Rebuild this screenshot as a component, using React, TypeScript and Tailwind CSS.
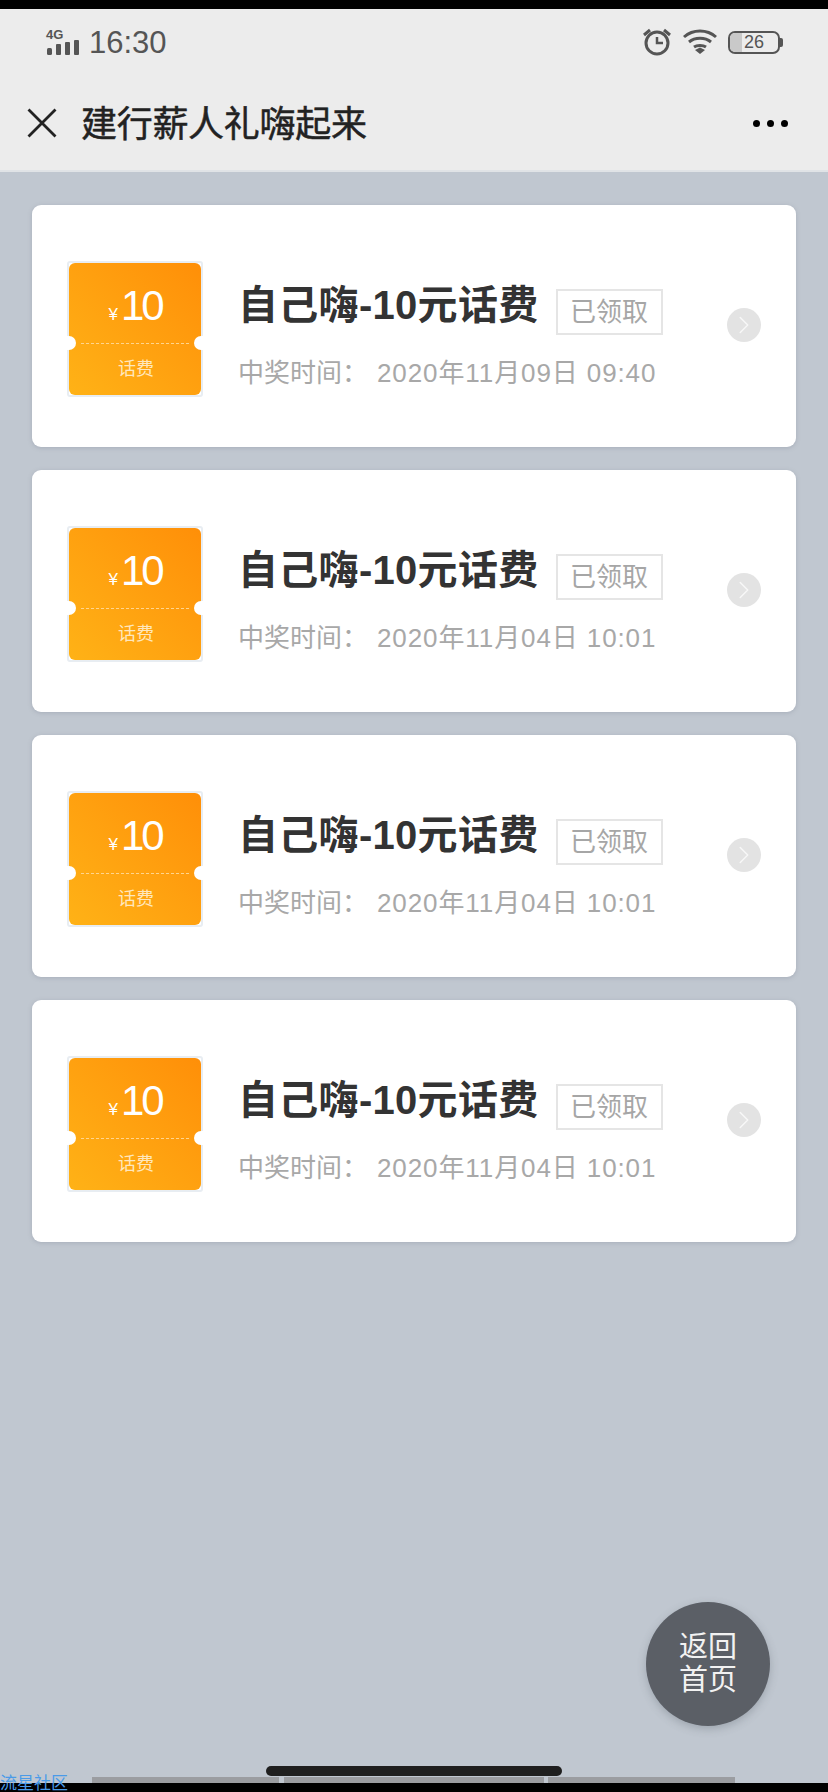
import React from 'react';
import { ChevronRight } from 'lucide-react';

const prizes = [
  { id: 1, time: '2020年11月09日 09:40' },
  { id: 2, time: '2020年11月04日 10:01' },
  { id: 3, time: '2020年11月04日 10:01' },
  { id: 4, time: '2020年11月04日 10:01' },
];

const font = "font-['Liberation_Sans','Noto_Sans_CJK_SC',sans-serif]";

const StatusBar = () => (
  <div className="flex h-[64px] items-center justify-between pl-[46px] pr-[45px] pt-[2px]">
    <div className="flex items-center gap-[9px]">
      <div className="flex w-[34px] flex-col">
        <span className="text-[13px] font-bold leading-[11px] text-[#555]">4G</span>
        <svg width="34" height="16" viewBox="0 0 34 16" fill="#555">
          <rect x="1" y="8" width="5" height="7" rx="1.500" />
          <rect x="10" y="4" width="5" height="11" rx="1" />
          <rect x="19" y="2" width="5" height="13" rx="1" />
          <rect x="28" y="0" width="5" height="15" rx="1" />
        </svg>
      </div>
      <span className="text-[31px] leading-none text-[#555]">16:30</span>
    </div>
    <div className="flex items-center gap-[10px]">
      <svg width="30" height="28" viewBox="0 0 30 28" fill="none" stroke="#555" strokeWidth="3">
        <circle cx="15" cy="15" r="11" />
        <path d="M15 9v6h6" strokeWidth="2.5" />
        <path d="M2 7l6-5M28 7l-6-5" strokeWidth="3" />
      </svg>
      <svg width="36" height="26" viewBox="0 0 36 26" fill="none" stroke="#555" strokeWidth="3">
        <path d="M2 8c9-8 23-8 32 0" />
        <path d="M7 13c6-5 16-5 22 0" />
        <path d="M12 18c3-2 9-2 12 0" />
        <path d="M13 21l5-2.500 5 2.500-5 4z" fill="#555" stroke="none" />
      </svg>
      <div className="flex items-center">
        <div className="relative flex h-[23px] w-[52px] items-center justify-center overflow-hidden rounded-[7px] border-[2px] border-[#555]">
          <div className="absolute bottom-0 left-0 top-0 w-[12px] bg-[#c9c9c9]" />
          <span className="relative text-[18px] leading-none text-[#555]">26</span>
        </div>
        <div className="h-[9px] w-[3px] rounded-r-[2px] bg-[#555]" />
      </div>
    </div>
  </div>
);

const Ticket = () => (
  <div className="relative mt-[5px] h-[136px] w-[136px] shrink-0 rounded-[3px] border-[2px] border-[#e8edf2] bg-[#fff]">
    <div className="flex h-full w-full flex-col items-center rounded-[6px] bg-gradient-to-tr from-[#ffb216] to-[#ff8f08]">
      <div className="flex h-[80px] items-end pb-[16px] text-[#fff]">
        <span className="mb-[4px] mr-[3px] text-[17px] leading-none">¥</span>
        <span className="text-[42px] leading-none tracking-[-3px]">10</span>
      </div>
      <div className="w-[108px] border-t border-dashed border-[#ffd58e]" />
      <span className="ml-[2px] mt-[16px] text-[18px] leading-none text-[#ffe7bd]">话费</span>
    </div>
    <div className="absolute left-[-3px] top-[73px] h-[14px] w-[10px] rounded-r-full bg-[#fff]" />
    <div className="absolute right-[-3px] top-[73px] h-[14px] w-[10px] rounded-l-full bg-[#fff]" />
  </div>
);

const PrizeCard = ({ time }: { time: string }) => (
  <div className="flex h-[242px] items-center rounded-[9px] bg-[#fff] pl-[35px] pr-[35px] shadow-[0_1px_4px_rgba(120,130,145,0.35)]">
    <Ticket />
    <div className="ml-[35px] mt-[18px] flex flex-col">
      <div className="flex items-start">
        <span className="text-[40px] font-bold leading-none tracking-[0.3px] text-[#333]">自己嗨-10元话费</span>
        <span className="ml-[17px] mt-[4px] flex h-[46px] w-[107px] items-center justify-center border-[2px] border-[#e5e5e5] text-[26px] leading-none text-[#a6a6a6]">
          已领取
        </span>
      </div>
      <div className="mt-[25px] flex items-center text-[26px] leading-none text-[#a8a8a8]">
        <span className="w-[139px]">中奖时间：</span>
        <span className="tracking-[0.9px]">{time}</span>
      </div>
    </div>
    <div className="mb-[2px] ml-auto flex h-[34px] w-[34px] shrink-0 items-center justify-center rounded-full bg-[#e3e3e3]">
      <ChevronRight size={30} strokeWidth={1.2} color="#f7f7f7" />
    </div>
  </div>
);

export default function App() {
  return (
    <div className={`relative flex h-[1792px] w-[828px] flex-col overflow-hidden bg-[#000] ${font}`}>
      <div className="mt-[9px] h-[163px] shrink-0 border-b-[2px] border-[#e0e3e6] bg-[#ececec]">
        <StatusBar />
        <div className="flex h-[100px] items-center pl-[27px] pr-[40px]">
          <svg width="30" height="30" viewBox="0 0 30 30" fill="none" stroke="#222" strokeWidth="2.8">
            <path d="M1.500 1.500l27 27M28.500 1.500l-27 27" />
          </svg>
          <h1 className="ml-[24px] mt-[4px] text-[36px] font-normal leading-none tracking-[-0.3px] text-[#222] [-webkit-text-stroke:0.5px_#222]">
            建行薪人礼嗨起来
          </h1>
          <div className="ml-auto flex gap-[7px]">
            <span className="h-[7px] w-[7px] rounded-full bg-[#000]" />
            <span className="h-[7px] w-[7px] rounded-full bg-[#000]" />
            <span className="h-[7px] w-[7px] rounded-full bg-[#000]" />
          </div>
        </div>
      </div>

      <div className="flex flex-1 flex-col gap-[23px] bg-[#c0c7d0] px-[32px] pt-[33px]">
        {prizes.map((p) => (
          <PrizeCard key={p.id} time={p.time} />
        ))}
      </div>

      <div className="flex h-[6px] shrink-0 bg-[#c0c7d0]">
        <div className="ml-[92px] h-[6px] w-[187px] bg-[#9b9da1]" />
        <div className="ml-[5px] h-[6px] w-[260px] bg-[#9b9da1]" />
        <div className="ml-[4px] h-[6px] w-[187px] bg-[#9b9da1]" />
      </div>
      <div className="h-[9px] shrink-0 bg-[#000]" />

      <div className="absolute left-[646px] top-[1602px] flex h-[124px] w-[124px] items-center justify-center rounded-full bg-[#5b5f66] text-center text-[29px] leading-[33px] text-[#f2f2f2] shadow-[0_3px_8px_rgba(80,90,100,0.3)]">
        返回
        <br />
        首页
      </div>
      <div className="absolute left-[266px] top-[1766px] h-[10px] w-[296px] rounded-full bg-[#1f1f1f]" />
      <span className="absolute left-0 top-[1775px] text-[17px] leading-none text-[#4a9be8]">流星社区</span>
    </div>
  );
}
